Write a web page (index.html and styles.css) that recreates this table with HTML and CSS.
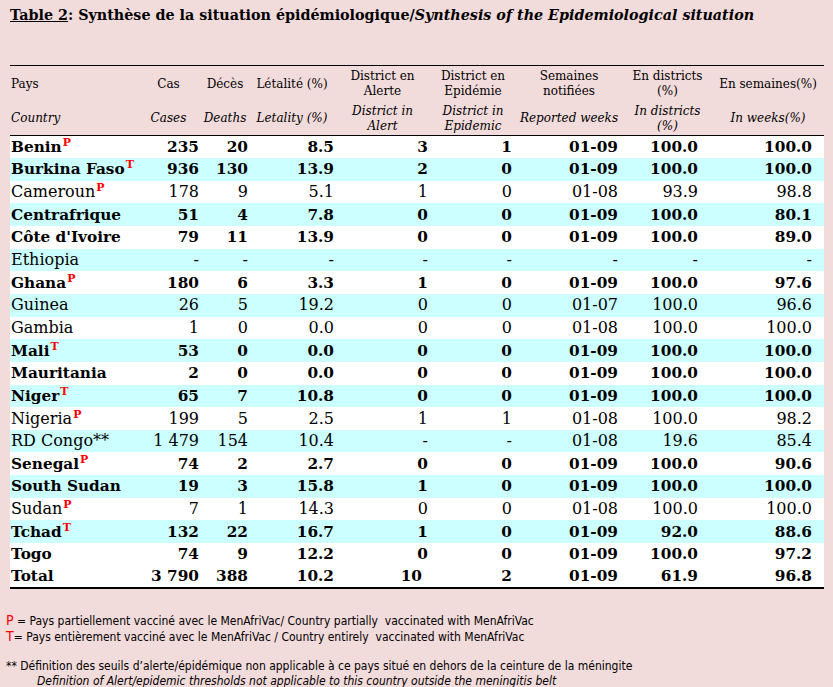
FILE: index.html
```html
<!DOCTYPE html>
<html lang="fr">
<head>
<meta charset="utf-8">
<title>Table 2</title>
<link rel="stylesheet" href="styles.css">
</head>
<body>
<div class="page">
  <h1 class="title"><span class="u">Table 2</span>: Synthèse de la situation épidémiologique/<em>Synthesis of the Epidemiological situation</em></h1>

  <table class="epi">
    <colgroup>
      <col class="c-pays"><col class="c-cas"><col class="c-dec"><col class="c-let"><col class="c-al"><col class="c-ep"><col class="c-sem"><col class="c-dis"><col class="c-wk">
    </colgroup>
    <thead>
      <tr class="h1">
        <th class="left">Pays</th>
        <th>Cas</th>
        <th>Décès</th>
        <th>Létalité (%)</th>
        <th>District en<br>Alerte</th>
        <th>District en<br>Epidémie</th>
        <th>Semaines<br>notifiées</th>
        <th>En districts<br>(%)</th>
        <th>En semaines(%)</th>
      </tr>
      <tr class="h2">
        <th class="left">Country</th>
        <th>Cases</th>
        <th>Deaths</th>
        <th>Letality (%)</th>
        <th>District in<br>Alert</th>
        <th>District in<br>Epidemic</th>
        <th>Reported weeks</th>
        <th>In districts<br>(%)</th>
        <th>In weeks(%)</th>
      </tr>
    </thead>
    <tbody>
      <tr class="b"><td>Benin<sup>P</sup></td><td>235</td><td>20</td><td>8.5</td><td>3</td><td>1</td><td>01-09</td><td>100.0</td><td>100.0</td></tr>
      <tr class="b cy"><td>Burkina Faso<sup>T</sup></td><td>936</td><td>130</td><td>13.9</td><td>2</td><td>0</td><td>01-09</td><td>100.0</td><td>100.0</td></tr>
      <tr><td>Cameroun<sup>P</sup></td><td>178</td><td>9</td><td>5.1</td><td>1</td><td>0</td><td>01-08</td><td>93.9</td><td>98.8</td></tr>
      <tr class="b cy"><td>Centrafrique</td><td>51</td><td>4</td><td>7.8</td><td>0</td><td>0</td><td>01-09</td><td>100.0</td><td>80.1</td></tr>
      <tr class="b"><td>Côte d'Ivoire</td><td>79</td><td>11</td><td>13.9</td><td>0</td><td>0</td><td>01-09</td><td>100.0</td><td>89.0</td></tr>
      <tr class="cy"><td>Ethiopia</td><td>-</td><td>-</td><td>-</td><td>-</td><td>-</td><td>-</td><td>-</td><td>-</td></tr>
      <tr class="b"><td>Ghana<sup>P</sup></td><td>180</td><td>6</td><td>3.3</td><td>1</td><td>0</td><td>01-09</td><td>100.0</td><td>97.6</td></tr>
      <tr class="cy"><td>Guinea</td><td>26</td><td>5</td><td>19.2</td><td>0</td><td>0</td><td>01-07</td><td>100.0</td><td>96.6</td></tr>
      <tr><td>Gambia</td><td>1</td><td>0</td><td>0.0</td><td>0</td><td>0</td><td>01-08</td><td>100.0</td><td>100.0</td></tr>
      <tr class="b cy"><td>Mali<sup>T</sup></td><td>53</td><td>0</td><td>0.0</td><td>0</td><td>0</td><td>01-09</td><td>100.0</td><td>100.0</td></tr>
      <tr class="b"><td>Mauritania</td><td>2</td><td>0</td><td>0.0</td><td>0</td><td>0</td><td>01-09</td><td>100.0</td><td>100.0</td></tr>
      <tr class="b cy"><td>Niger<sup>T</sup></td><td>65</td><td>7</td><td>10.8</td><td>0</td><td>0</td><td>01-09</td><td>100.0</td><td>100.0</td></tr>
      <tr><td>Nigeria<sup>P</sup></td><td>199</td><td>5</td><td>2.5</td><td>1</td><td>1</td><td>01-08</td><td>100.0</td><td>98.2</td></tr>
      <tr class="cy"><td>RD Congo**</td><td>1 479</td><td>154</td><td>10.4</td><td>-</td><td>-</td><td>01-08</td><td>19.6</td><td>85.4</td></tr>
      <tr class="b"><td>Senegal<sup>P</sup></td><td>74</td><td>2</td><td>2.7</td><td>0</td><td>0</td><td>01-09</td><td>100.0</td><td>90.6</td></tr>
      <tr class="b cy"><td>South Sudan</td><td>19</td><td>3</td><td>15.8</td><td>1</td><td>0</td><td>01-09</td><td>100.0</td><td>100.0</td></tr>
      <tr><td>Sudan<sup>P</sup></td><td>7</td><td>1</td><td>14.3</td><td>0</td><td>0</td><td>01-08</td><td>100.0</td><td>100.0</td></tr>
      <tr class="b cy"><td>Tchad<sup>T</sup></td><td>132</td><td>22</td><td>16.7</td><td>1</td><td>0</td><td>01-09</td><td>92.0</td><td>88.6</td></tr>
      <tr class="b"><td>Togo</td><td>74</td><td>9</td><td>12.2</td><td>0</td><td>0</td><td>01-09</td><td>100.0</td><td>97.2</td></tr>
      <tr class="b total"><td>Total</td><td>3 790</td><td>388</td><td>10.2</td><td class="ten">10</td><td>2</td><td>01-09</td><td>61.9</td><td>96.8</td></tr>
    </tbody>
  </table>

  <div class="notes">
    <p class="note"><span class="key">P</span> = Pays partiellement vacciné avec le MenAfriVac/ Country partially&nbsp; vaccinated with MenAfriVac</p>
    <p class="note"><span class="key">T</span>= Pays entièrement vacciné avec le MenAfriVac / Country entirely&nbsp; vaccinated with MenAfriVac</p>
    <p class="note gap">** Définition des seuils d’alerte/épidémique non applicable à ce pays situé en dehors de la ceinture de la méningite</p>
    <p class="note ital">Definition of Alert/epidemic thresholds not applicable to this country outside the meningitis belt</p>
  </div>
</div>
</body>
</html>
```

FILE: styles.css
```css
html, body {
  margin: 0;
  padding: 0;
  background: #f2dbdb;
}

.page {
  width: 833px;
  height: 687px;
  overflow: hidden;
  font-family: "DejaVu Serif", "Liberation Serif", serif;
  color: #000;
}

.title {
  margin: 0;
  padding: 5px 0 0 10px;
  height: 20px;
  font-size: 14.3px;
  font-weight: bold;
  line-height: 20px;
  white-space: nowrap;
}

.title .u {
  text-decoration: underline;
}

.title em {
  font-style: italic;
}

.epi {
  margin: 40px 0 0 10px;
  border-collapse: collapse;
  table-layout: fixed;
  width: 814px;
}

.c-pays { width: 127px; }
.c-cas { width: 63px; }
.c-dec { width: 50px; }
.c-let { width: 84px; }
.c-al { width: 97px; }
.c-ep { width: 84px; }
.c-sem { width: 108px; }
.c-dis { width: 89px; }
.c-wk { width: 112px; }

.epi thead th {
  font-weight: normal;
  font-size: 12px;
  line-height: 15px;
  text-align: center;
  vertical-align: middle;
  padding: 0 1px;
  white-space: nowrap;
}

.epi thead th.left {
  text-align: left;
  padding-left: 1px;
}

.epi thead .h1 th {
  border-top: 1.5px solid #000;
  height: 36px;
}

.epi thead .h2 th {
  font-style: italic;
  height: 33px;
  border-bottom: 1.5px solid #000;
}

.epi tbody tr {
  height: 22.65px;
  background: #fff;
}

.epi tbody tr.cy {
  background: #ccffff;
}

.epi tbody td {
  font-size: 16px;
  line-height: 20px;
  padding: 0;
  text-align: right;
  white-space: nowrap;
  vertical-align: middle;
}

.epi tbody tr.b td {
  font-weight: bold;
  font-size: 15.3px;
}

.epi tbody td:nth-child(1) { text-align: left; padding-left: 1px; }
.epi tbody td:nth-child(2) { padding-right: 1px; }
.epi tbody td:nth-child(3) { padding-right: 2px; }
.epi tbody td:nth-child(4) { padding-right: 0; }
.epi tbody td:nth-child(5) { padding-right: 3px; }
.epi tbody td:nth-child(6) { padding-right: 3px; }
.epi tbody td:nth-child(7) { padding-right: 5px; }
.epi tbody td:nth-child(8) { padding-right: 14px; }
.epi tbody td:nth-child(9) { padding-right: 12px; }

.epi tbody tr.total td {
  border-bottom: 2px solid #000;
}

.epi tbody tr.total td.ten {
  padding-right: 9px;
}

.epi sup {
  color: #ff0000;
  font-weight: bold;
  font-size: 11px;
  line-height: 0;
  vertical-align: 6px;
  margin-left: 1px;
}

.notes {
  margin-top: 24px;
  font-family: "DejaVu Sans Condensed", "Liberation Sans Narrow", "Liberation Sans", sans-serif;
  font-size: 12px;
  font-stretch: condensed;
}

.note {
  margin: 0 0 0 6px;
  line-height: 15px;
  white-space: nowrap;
}

.note .key {
  color: #ff0000;
  font-size: 14px;
}

.note.gap {
  margin-top: 14px;
}

.note.ital {
  font-style: italic;
  margin-left: 37px;
}
```
